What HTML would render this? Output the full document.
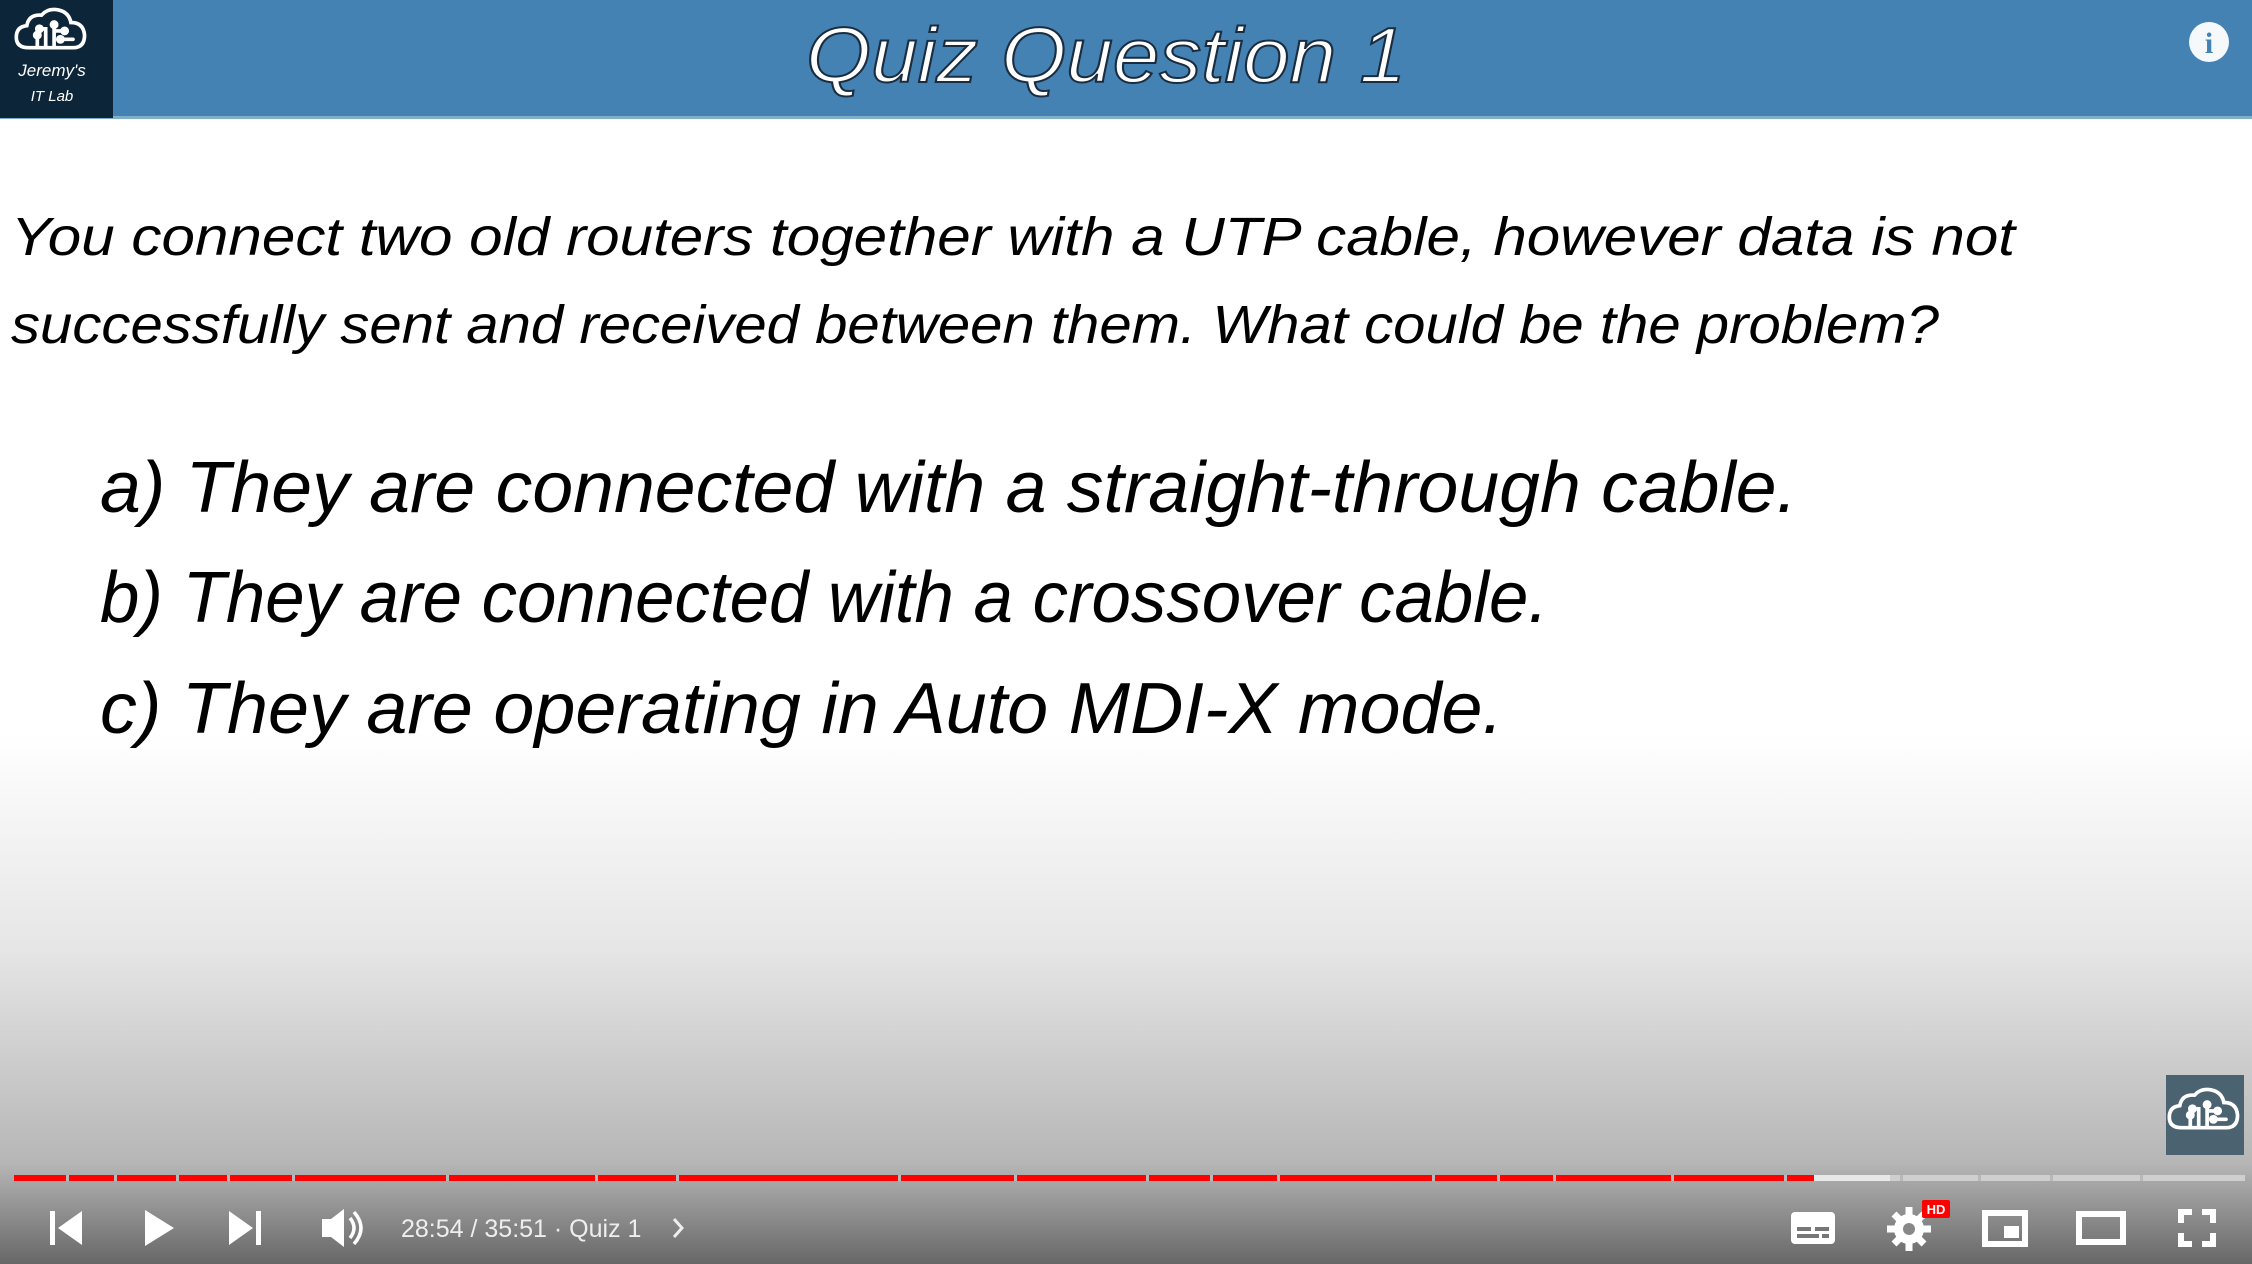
<!DOCTYPE html>
<html><head><meta charset="utf-8"><style>
html,body{margin:0;padding:0;width:2252px;height:1264px;overflow:hidden}
svg{display:block}
</style></head><body>
<svg width="2252" height="1264" viewBox="0 0 2252 1264" xmlns="http://www.w3.org/2000/svg">
<defs>
<linearGradient id="bg" x1="0" y1="0" x2="0" y2="1">
<stop offset="0" stop-color="#ffffff"/>
<stop offset="0.58" stop-color="#ffffff"/>
<stop offset="0.75" stop-color="#e6e6e6"/>
<stop offset="0.92" stop-color="#b6b6b6"/>
<stop offset="1" stop-color="#676767"/>
</linearGradient>
<g id="cloud" fill="none" stroke="#fff" stroke-width="3.5" stroke-linecap="round">
<path d="M-22 14 Q-34 14 -34 4 Q-34 -6 -24 -7 Q-22 -18 -10 -17 Q-4 -24 6 -22 Q16 -20 18 -10 Q30 -10 31 2 Q31 14 20 14 Z"/>
<path d="M-14 14 V2 M-6 14 V-4 H-12 M2 14 V-8 M8 6 H20 M4 -2 H12"/>
<circle cx="-14" cy="2" r="2.5" fill="#fff"/><circle cx="-12" cy="-4" r="2.5" fill="#fff"/><circle cx="2" cy="-8" r="2.5" fill="#fff"/><circle cx="8" cy="6" r="2.5" fill="#fff"/><circle cx="12" cy="-2" r="2.5" fill="#fff"/>
</g>
</defs>
<rect width="2252" height="1264" fill="url(#bg)"/>
<rect x="0" y="0" width="2252" height="118" fill="#4582b4"/>
<rect x="0" y="116" width="2252" height="3" fill="#7fb0c8"/>
<rect x="0" y="0" width="113" height="118" fill="#0c2538"/>
<use href="#cloud" transform="translate(52,33) scale(1.05)"/>
<text x="52" y="76" font-family="Liberation Sans, sans-serif" font-style="italic" font-size="17" fill="#fff" text-anchor="middle">Jeremy's</text>
<text x="52" y="101" font-family="Liberation Sans, sans-serif" font-style="italic" font-size="15" fill="#fff" text-anchor="middle">IT Lab</text>
<text x="806" y="82" textLength="600" lengthAdjust="spacingAndGlyphs" font-family="Liberation Sans, sans-serif" font-style="italic" font-size="78" fill="#fff" stroke="#1a2d40" stroke-width="2">Quiz Question 1</text>
<circle cx="2209" cy="42" r="20" fill="#fff" opacity="0.95"/>
<text x="2209" y="53" font-family="Liberation Serif, serif" font-weight="bold" font-size="30" fill="#4582b4" text-anchor="middle">i</text>

<g font-family="Liberation Sans, sans-serif" font-style="italic" fill="#000">
<text x="11" y="255" font-size="54" textLength="2004" lengthAdjust="spacingAndGlyphs">You connect two old routers together with a UTP cable, however data is not</text>
<text x="11" y="343" font-size="54" textLength="1928" lengthAdjust="spacingAndGlyphs">successfully sent and received between them. What could be the problem?</text>
<text x="100" y="512" font-size="72" textLength="1697" lengthAdjust="spacingAndGlyphs">a) They are connected with a straight-through cable.</text>
<text x="100" y="622" font-size="72" textLength="1448" lengthAdjust="spacingAndGlyphs">b) They are connected with a crossover cable.</text>
<text x="100" y="733" font-size="72" textLength="1403" lengthAdjust="spacingAndGlyphs">c) They are operating in Auto MDI-X mode.</text>
</g>

<rect x="2166" y="1075" width="78" height="80" fill="#4b6370"/>
<use href="#cloud" transform="translate(2205,1113) scale(1.05)"/>

<rect x="14" y="1175" width="2231" height="6" fill="#cfcfcf"/>
<rect x="1814" y="1175" width="76" height="6" fill="#e8e8e8"/>
<rect x="14" y="1175" width="1800" height="6" fill="#ff0000"/>
<g fill="#b8b8b8">
<rect x="66" y="1175" width="3" height="6"/><rect x="114" y="1175" width="3" height="6"/><rect x="176" y="1175" width="3" height="6"/><rect x="227" y="1175" width="3" height="6"/><rect x="292" y="1175" width="3" height="6"/><rect x="446" y="1175" width="3" height="6"/><rect x="595" y="1175" width="3" height="6"/><rect x="676" y="1175" width="3" height="6"/><rect x="898" y="1175" width="3" height="6"/><rect x="1014" y="1175" width="3" height="6"/><rect x="1146" y="1175" width="3" height="6"/><rect x="1210" y="1175" width="3" height="6"/><rect x="1277" y="1175" width="3" height="6"/><rect x="1432" y="1175" width="3" height="6"/><rect x="1497" y="1175" width="3" height="6"/><rect x="1553" y="1175" width="3" height="6"/><rect x="1671" y="1175" width="3" height="6"/><rect x="1784" y="1175" width="3" height="6"/><rect x="1900" y="1175" width="3" height="6"/><rect x="1978" y="1175" width="3" height="6"/><rect x="2050" y="1175" width="3" height="6"/><rect x="2140" y="1175" width="3" height="6"/>
</g>

<g fill="#fff">
<rect x="50" y="1211" width="5" height="34"/><path d="M82 1211 V1245 L58 1228 Z"/>
<path d="M145 1210 V1246 L174 1228 Z"/>
<path d="M229 1211 V1245 L253 1228 Z"/><rect x="256" y="1211" width="5" height="34"/>
<path d="M322 1219 H331 L344 1209 V1247 L331 1237 H322 Z"/>
<path d="M350 1218 Q358 1228 350 1238" stroke="#fff" stroke-width="3.5" fill="none"/>
<path d="M354 1212 Q368 1228 354 1244" stroke="#fff" stroke-width="3.5" fill="none"/>
<text x="401" y="1237" font-family="Liberation Sans, sans-serif" font-size="25" fill="#eee">28:54 / 35:51 · Quiz 1</text>
<path d="M674 1219 L682 1228 L674 1237" stroke="#eee" stroke-width="3" fill="none"/>
<rect x="1791" y="1212" width="44" height="32" rx="4"/>
<g fill="#777"><rect x="1797" y="1227" width="14" height="4"/><rect x="1815" y="1227" width="14" height="4"/><rect x="1797" y="1234" width="22" height="4"/><rect x="1822" y="1234" width="7" height="4"/></g>
<circle cx="1909" cy="1229" r="15"/><g stroke="#fff" stroke-width="7"><path d="M1909 1207 V1251 M1887 1229 H1931 M1894 1214 L1924 1244 M1924 1214 L1894 1244"/></g><circle cx="1909" cy="1229" r="6" fill="#888"/>
<rect x="1922" y="1200" width="28" height="18" rx="2" fill="#f00"/><text x="1936" y="1214" font-family="Liberation Sans, sans-serif" font-weight="bold" font-size="13" text-anchor="middle">HD</text>
<path fill-rule="evenodd" d="M1982 1210 H2028 V1247 H1982 Z M1988 1216 V1241 H2022 V1216 Z"/><rect x="2004" y="1226" width="15" height="12"/>
<path fill-rule="evenodd" d="M2076 1211 H2126 V1245 H2076 Z M2082 1217 V1239 H2120 V1217 Z"/>
<path d="M2178 1209 H2192 V1215 H2184 V1223 H2178 Z M2202 1209 H2216 V1223 H2210 V1215 H2202 Z M2178 1233 H2184 V1241 H2192 V1247 H2178 Z M2210 1233 H2216 V1247 H2202 V1241 H2210 Z"/>
</g>
</svg>
</body></html>
